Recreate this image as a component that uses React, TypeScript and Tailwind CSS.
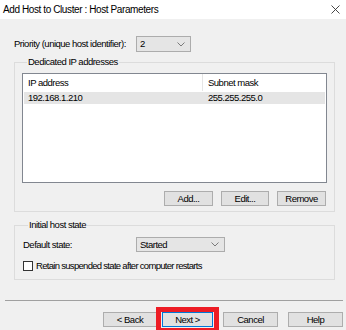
import React from "react";

const Chevron: React.FC = () => (
  <svg width="8" height="5" viewBox="0 0 8 5" className="shrink-0">
    <polyline points="0.5,0.5 4,4 7.5,0.5" fill="none" stroke="#7a7a7a" strokeWidth="1" />
  </svg>
);

const Combo: React.FC<{ value: string; className: string }> = ({ value, className }) => (
  <div
    className={`flex items-center justify-between bg-[#e5e5e5] border border-[#acacac] pl-[3px] pr-[5px] ${className}`}
  >
    <span>{value}</span>
    <Chevron />
  </div>
);

const Btn: React.FC<{ label: string; className: string; focused?: boolean }> = ({ label, className, focused }) => (
  <div
    className={`flex items-center justify-center h-[15px] bg-[#e1e1e1] border ${
      focused ? "border-[#0078d7]" : "border-[#adadad]"
    } ${className}`}
  >
    {label}
  </div>
);

export default function App() {
  return (
    <div className="w-[346px] h-[330px] overflow-hidden bg-[#f0f0f0] text-black text-[9.5px] tracking-[-0.5px] leading-[12px] whitespace-nowrap font-['Liberation_Sans',Arial,sans-serif]">
      {/* TITLE BAR */}
      <div className="h-[19px] bg-white flex items-center justify-between pl-[3px] pr-[6px]">
        <span className="text-[10px] tracking-[-0.4px]">Add Host to Cluster : Host Parameters</span>
        <svg width="9" height="9" viewBox="0 0 9 9">
          <path d="M0.5 0.5 L8.5 8.5 M8.5 0.5 L0.5 8.5" stroke="#333" strokeWidth="0.9" />
        </svg>
      </div>

      {/* PRIORITY */}
      <div className="flex items-center mt-[17px] pl-[14px]">
        <span className="w-[122px]">Priority (unique host identifier):</span>
        <Combo value="2" className="w-[55px] h-[16px]" />
      </div>

      {/* DEDICATED IP ADDRESSES */}
      <fieldset className="mt-[4px] ml-[14px] w-[321px] border border-[#dcdcdc] px-[7px] pb-[5px]">
        <legend className="ml-[5px] px-[1px]">Dedicated IP addresses</legend>
        <div className="mt-[5px] h-[110px] bg-white border border-[#828790]">
          <div className="flex h-[17px] items-center">
            <div className="w-[180px] h-full flex items-center pl-[5px] border-r border-[#e5e5e5]">IP address</div>
            <div className="pl-[5px]">Subnet mask</div>
          </div>
          <div className="flex h-[12px] items-center bg-[#e5e5e5] mx-[1px] mt-[1px]">
            <div className="w-[180px] pl-[4px]">192.168.1.210</div>
            <div className="pl-[4px]">255.255.255.0</div>
          </div>
        </div>
        <div className="flex justify-end gap-[8px] mt-[8px] mr-[1px]">
          <Btn label="Add..." className="w-[49px]" />
          <Btn label="Edit..." className="w-[48px]" />
          <Btn label="Remove" className="w-[49px]" />
        </div>
      </fieldset>

      {/* INITIAL HOST STATE */}
      <fieldset className="mt-[7px] ml-[14px] w-[321px] border border-[#dcdcdc] px-[8px] pb-[7px]">
        <legend className="ml-[5px] px-[1px]">Initial host state</legend>
        <div className="flex items-center mt-[6px]">
          <span className="w-[113px]">Default state:</span>
          <Combo value="Started" className="w-[89px] h-[15px]" />
        </div>
        <div className="flex items-center gap-[3px] mt-[8px]">
          <div className="w-[10px] h-[10px] bg-white border border-[#333]" />
          <span className="tracking-[-0.7px]">Retain suspended state after computer restarts</span>
        </div>
      </fieldset>

      {/* SEPARATOR */}
      <div className="mt-[20px] ml-[5px] mr-[3px] border-t border-[#a0a0a0]" />

      {/* FOOTER BUTTONS */}
      <div className="flex mt-[11px] ml-[103px]">
        <Btn label="< Back" className="w-[54px]" />
        <div className="relative ml-[5px]">
          <Btn label="Next >" className="w-[51px]" focused />
          <div className="absolute -left-[6px] -right-[6px] -top-[5px] -bottom-[6px] border-[5px] border-[#ed1c24]" />
        </div>
        <Btn label="Cancel" className="w-[55px] ml-[10px]" />
        <Btn label="Help" className="w-[55px] ml-[10px]" />
      </div>
    </div>
  );
}
